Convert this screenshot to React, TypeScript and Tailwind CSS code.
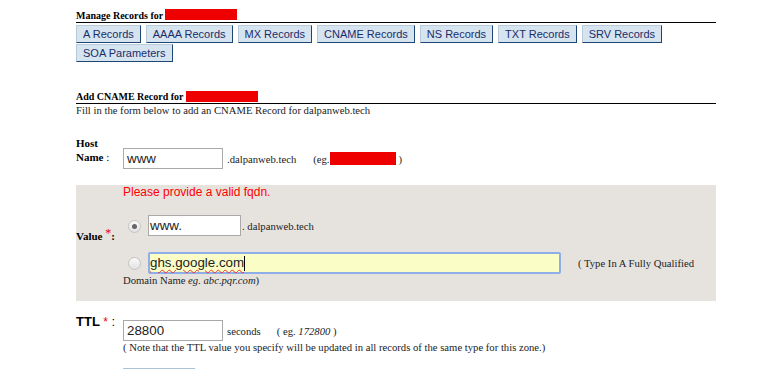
const tabs = [
  'A Records',
  'AAAA Records',
  'MX Records',
  'CNAME Records',
  'NS Records',
  'TXT Records',
  'SRV Records',
  'SOA Parameters',
];

function Radio({ checked }: { checked?: boolean }) {
  return (
    <div className="w-[13px] h-[13px] rounded-full border border-[#c3c3c3] bg-gradient-to-b from-[#fafafa] to-[#e2e2e2] flex items-center justify-center shrink-0">
      {checked && <div className="w-[5px] h-[5px] rounded-full bg-[#666]" />}
    </div>
  );
}

export default function App() {
  return (
    <div className="min-h-[369px] bg-white text-black font-['Liberation_Serif',serif] text-[10.67px]">
      <div className="w-[640px] ml-[76px] pt-[9px]">
        {/* Manage records header */}
        <div className="h-[14px] leading-[14px] border-b border-black font-bold text-[10px] flex items-start">
          <span>Manage Records for</span>
          <span className="inline-block w-[72px] h-[11px] bg-[#ef0000] ml-[2px]" />
        </div>

        <div className="mt-[2px] flex flex-wrap gap-x-[5px] gap-y-[1px]">
          {tabs.map((t) => (
            <button
              key={t}
              className="h-[18px] px-[6px] bg-[#d6e4ef] border border-t-[#b9cbdb] border-l-[#b9cbdb] border-r-[#1d4676] border-b-[#1d4676] text-[11px] leading-[16px] text-[#1b2c6b] font-['Liberation_Sans',sans-serif]"
            >
              {t}
            </button>
          ))}
        </div>

        {/* Add CNAME header */}
        <div className="mt-[28px] h-[14px] leading-[14px] border-b border-black font-bold text-[10px] flex items-start">
          <span>Add CNAME Record for</span>
          <span className="inline-block w-[72px] h-[11px] bg-[#ef0000] ml-[2px] mt-[1px]" />
        </div>
        <p className="leading-[13px] text-[#222]">
          Fill in the form below to add an CNAME Record for dalpanweb.tech
        </p>

        {/* Host name */}
        <div className="mt-[19px] flex items-start">
          <div className="w-[47px] font-bold text-[11px] leading-[14px]">
            Host
            <br />
            Name <span className="font-normal">:</span>
          </div>
          <div className="mt-[12px] flex items-center">
            <div className="w-[100px] h-[21px] border border-[#a9a9a9] bg-white pl-[3px] text-[13.33px] leading-[19px] font-['Liberation_Sans',sans-serif] text-[#222]">
              www
            </div>
            <span className="ml-[4px] text-[#222]">.dalpanweb.tech</span>
            <span className="ml-[17px] text-[#222]">(eg.</span>
            <span className="inline-block w-[66px] h-[13px] bg-[#ef0000]" />
            <span className="ml-[3px] text-[#222]">)</span>
          </div>
        </div>

        {/* Value */}
        <div className="mt-[16px] bg-[#e6e3df] flex items-center pb-[14px]">
          <div className="w-[47px] font-bold text-[11px]">
            Value <span className="text-[#e00] font-normal align-top text-[12px] leading-[10px]">*</span>:
          </div>
          <div className="flex-1">
            <div className="text-[12px] leading-[13px] pt-[1px] text-[#f00] font-['Liberation_Sans',sans-serif]">
              Please provide a valid fqdn.
            </div>
            <div className="mt-[16px] flex items-center">
              <div className="ml-[5px] mr-[7px] mt-[1px]">
                <Radio checked />
              </div>
              <div className="w-[93px] h-[21px] border border-[#a9a9a9] bg-white pl-[1px] text-[13.33px] leading-[19px] font-['Liberation_Sans',sans-serif] text-[#222]">
                www.
              </div>
              <span className="ml-[1px] text-[#222]">. dalpanweb.tech</span>
            </div>
            <div className="mt-[16px] flex items-center">
              <div className="ml-[5px] mr-[7px] mt-[1px]">
                <Radio />
              </div>
              <div className="w-[413px] h-[22px] border-2 border-[#8eaeea] rounded-[2px] bg-[#fbfdc6] text-[13.33px] leading-[18px] font-['Liberation_Sans',sans-serif] text-[#222] flex items-center">
                <span className="underline decoration-wavy decoration-[#e33] decoration-[1px] underline-offset-[2px]">
                  ghs.google.com
                </span>
                <span className="w-px h-[15px] bg-black" />
              </div>
              <span className="ml-[17px] text-[#222]">( Type In A Fully Qualified</span>
            </div>
            <div className="leading-[13px] text-[#222]">
              Domain Name <i>eg. abc.pqr.com</i>)
            </div>
          </div>
        </div>

        {/* TTL */}
        <div className="mt-[13px] flex items-start">
          <div className="w-[47px] font-['Liberation_Sans',sans-serif] text-[13px] leading-[16px] font-bold">
            TTL <span className="text-[#e00] font-normal text-[12px]">*</span>{' '}
            <span className="font-normal">:</span>
          </div>
          <div className="mt-[6px]">
            <div className="flex items-center">
              <div className="w-[100px] h-[21px] border border-[#a9a9a9] bg-white pl-[3px] text-[13.33px] leading-[19px] font-['Liberation_Sans',sans-serif] text-[#222]">
                28800
              </div>
              <span className="ml-[4px] text-[#222]">seconds</span>
              <span className="ml-[16px] text-[#222]">
                ( eg. <i>172800</i> )
              </span>
            </div>
            <p className="leading-[12px] text-[#222]">
              ( Note that the TTL value you specify will be updated in all records of the same type for this zone.)
            </p>
            <button className="mt-[15px] w-[72px] h-[20px] border border-[#a9c3d8] bg-[#e4eef6]" />
          </div>
        </div>
      </div>
    </div>
  );
}
